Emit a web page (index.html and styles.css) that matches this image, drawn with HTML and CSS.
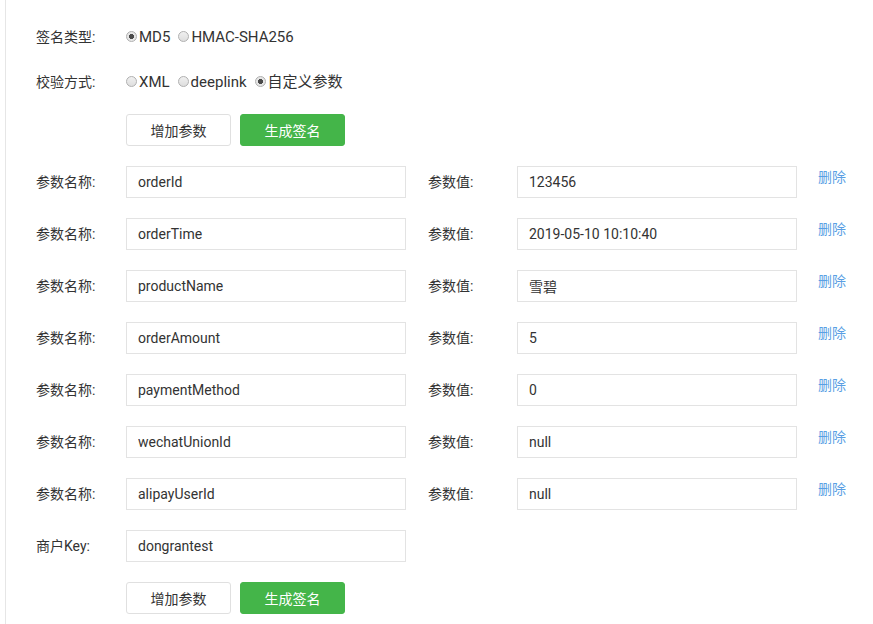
FILE: index.html
```html
<!DOCTYPE html>
<html lang="zh-CN">
<head>
<meta charset="utf-8">
<title>签名工具</title>
<link rel="stylesheet" href="styles.css">
</head>
<body>
<div class="page">
  <div class="opt-row first">
    <span class="label">签名类型:</span>
    <label class="radio"><input type="radio" name="sign" checked>MD5</label>
    <label class="radio"><input type="radio" name="sign">HMAC-SHA256</label>
  </div>
  <div class="opt-row">
    <span class="label">校验方式:</span>
    <label class="radio"><input type="radio" name="mode">XML</label>
    <label class="radio"><input type="radio" name="mode">deeplink</label>
    <label class="radio"><input type="radio" name="mode" checked>自定义参数</label>
  </div>
  <div class="btn-row">
    <button class="btn btn-default">增加参数</button>
    <button class="btn btn-primary">生成签名</button>
  </div>

  <div class="param-row">
    <span class="label">参数名称:</span>
    <input class="field" type="text" value="orderId">
    <span class="label label2">参数值:</span>
    <input class="field" type="text" value="123456">
    <a class="del" href="#">删除</a>
  </div>
  <div class="param-row">
    <span class="label">参数名称:</span>
    <input class="field" type="text" value="orderTime">
    <span class="label label2">参数值:</span>
    <input class="field" type="text" value="2019-05-10 10:10:40">
    <a class="del" href="#">删除</a>
  </div>
  <div class="param-row">
    <span class="label">参数名称:</span>
    <input class="field" type="text" value="productName">
    <span class="label label2">参数值:</span>
    <input class="field" type="text" value="雪碧">
    <a class="del" href="#">删除</a>
  </div>
  <div class="param-row">
    <span class="label">参数名称:</span>
    <input class="field" type="text" value="orderAmount">
    <span class="label label2">参数值:</span>
    <input class="field" type="text" value="5">
    <a class="del" href="#">删除</a>
  </div>
  <div class="param-row">
    <span class="label">参数名称:</span>
    <input class="field" type="text" value="paymentMethod">
    <span class="label label2">参数值:</span>
    <input class="field" type="text" value="0">
    <a class="del" href="#">删除</a>
  </div>
  <div class="param-row">
    <span class="label">参数名称:</span>
    <input class="field" type="text" value="wechatUnionId">
    <span class="label label2">参数值:</span>
    <input class="field" type="text" value="null">
    <a class="del" href="#">删除</a>
  </div>
  <div class="param-row">
    <span class="label">参数名称:</span>
    <input class="field" type="text" value="alipayUserId">
    <span class="label label2">参数值:</span>
    <input class="field" type="text" value="null">
    <a class="del" href="#">删除</a>
  </div>
  <div class="param-row">
    <span class="label">商户Key:</span>
    <input class="field" type="text" value="dongrantest">
  </div>
  <div class="btn-row">
    <button class="btn btn-default">增加参数</button>
    <button class="btn btn-primary">生成签名</button>
  </div>
</div>
</body>
</html>
```
FILE: styles.css
```css
html, body {
  margin: 0;
  padding: 0;
  background: #ffffff;
}
body {
  font-family: Roboto, "Noto Sans CJK SC", sans-serif;
  font-size: 14px;
  color: #333333;
}
.page {
  margin-left: 5px;
  border-left: 1px solid #e6e6e6;
  padding: 27px 0 0 30px;
  min-height: 624px;
  box-sizing: border-box;
}
.label {
  width: 90px;
  flex: none;
  color: #333333;
}
.opt-row {
  display: flex;
  align-items: center;
  height: 20px;
  line-height: 20px;
}
.opt-row.first {
  margin-bottom: 25px;
}
.radio {
  display: inline-flex;
  align-items: center;
  margin-right: 8px;
  font-size: 15px;
  cursor: pointer;
}
.radio input {
  appearance: none;
  -webkit-appearance: none;
  width: 11px;
  height: 11px;
  margin: 0 2px 0 0;
  border: 1px solid #b0b0b0;
  border-radius: 50%;
  background: linear-gradient(#f0f0f0, #dedede);
  box-sizing: border-box;
  position: relative;
  top: -1px;
}
.radio input:checked {
  background: radial-gradient(circle, #4a4a4a 0 2.3px, #e6e6e6 2.8px);
}
.btn-row {
  display: flex;
  gap: 9px;
  padding-left: 90px;
  margin: 22px 0 20px;
}
.btn {
  width: 105px;
  height: 32px;
  border-radius: 3px;
  font-family: Roboto, "Noto Sans CJK SC", sans-serif;
  font-size: 14px;
  cursor: pointer;
}
.btn-default {
  background: #ffffff;
  border: 1px solid #e0e0e0;
  color: #333333;
}
.btn-primary {
  background: #44b549;
  border: 1px solid #44b549;
  color: #ffffff;
}
.param-row {
  display: flex;
  align-items: center;
  height: 32px;
  margin-bottom: 20px;
}
.param-row .label {
  line-height: 32px;
}
.param-row .label2 {
  margin-left: 22px;
  width: 89px;
}
.field {
  width: 280px;
  height: 32px;
  box-sizing: border-box;
  border: 1px solid #e3e3e3;
  padding: 0 11px;
  font-family: Roboto, "Noto Sans CJK SC", sans-serif;
  font-size: 14px;
  color: #333333;
  outline: none;
  margin: 0;
}
.del {
  align-self: flex-start;
  margin-left: 21px;
  line-height: 22px;
  color: #5a9fe4;
  text-decoration: none;
}
.param-row + .btn-row {
  margin-top: 0;
}
```
